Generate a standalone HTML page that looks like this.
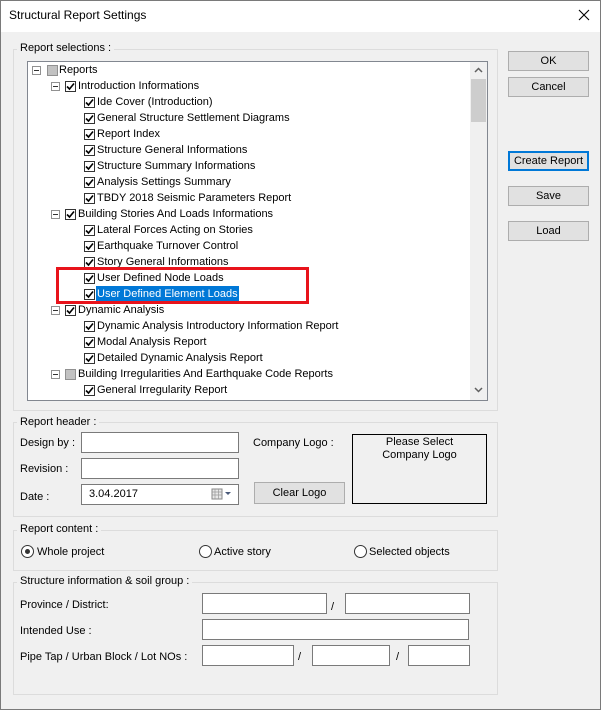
<!DOCTYPE html>
<html><head><meta charset="utf-8"><style>
*{box-sizing:border-box;margin:0;padding:0}
body{width:601px;height:710px;overflow:hidden;background:#f0f0f0;font-family:"Liberation Sans",sans-serif;font-size:11px;color:#000;position:relative}
.a{position:absolute;white-space:nowrap}
.win{position:absolute;left:0;top:0;width:601px;height:710px;border:1px solid #7a7a7a}
.title{position:absolute;left:0;top:0;width:601px;height:32px;background:#fff}
.grp{position:absolute;border:1px solid #dcdcdc}
.lg{position:absolute;background:#f0f0f0;padding:0 3px;line-height:13px}
.btn{position:absolute;width:81px;height:20px;background:#e1e1e1;border:1px solid #adadad;text-align:center;line-height:18px;font-size:11px}
.inp{position:absolute;background:#fff;border:1px solid #7a7a7a;height:21px}
.tree{position:absolute;left:27px;top:61px;width:461px;height:340px;background:#fff;border:1px solid #828790;overflow:hidden}
.r{position:absolute;height:16px;line-height:16px;white-space:nowrap}
.ex{position:absolute;width:9px;height:9px;border:1px solid #919191;background:#fff}
.ex:after{content:"";position:absolute;left:1px;top:3px;width:5px;height:1px;background:#333}
.cb{position:absolute;width:11px;height:11px;border:1px solid #333;background:#fff}
.cb svg{position:absolute;left:0;top:0}
.gr{position:absolute;width:11px;height:11px;border:1px solid #919191;background:#c2c2c2}
.rad{position:absolute;width:13px;height:13px;border:1px solid #333;border-radius:50%;background:#fff}
</style></head><body>
<div class="title"></div>
<div class="a" style="left:9px;top:8px;font-size:12px">Structural Report Settings</div>
<svg class="a" style="left:578px;top:9px" width="12" height="12"><path d="M1 1L11 11M11 1L1 11" stroke="#000" stroke-width="1.1"/></svg>

<div class="grp" style="left:13px;top:49px;width:485px;height:362px"></div>
<div class="lg" style="left:17px;top:42px">Report selections :</div>

<div class="tree">
<div id="t"></div>
<div style="position:absolute;left:442px;top:0;width:17px;height:338px;background:#f0f0f0"></div>
<div style="position:absolute;left:443px;top:17px;width:15px;height:43px;background:#cdcdcd"></div>
<svg style="position:absolute;left:446px;top:5px" width="9" height="6"><path d="M1 5L4.5 1.5L8 5" stroke="#606060" stroke-width="1.5" fill="none"/></svg>
<svg style="position:absolute;left:446px;top:325px" width="9" height="6"><path d="M1 1L4.5 4.5L8 1" stroke="#606060" stroke-width="1.5" fill="none"/></svg>
</div>

<div style="position:absolute;left:56px;top:267px;width:253px;height:37px;border:3px solid #e8131b"></div>

<div class="btn" style="left:508px;top:51px">OK</div>
<div class="btn" style="left:508px;top:77px">Cancel</div>
<div class="btn" style="left:508px;top:151px;border:2px solid #0078d7;line-height:16px">Create Report</div>
<div class="btn" style="left:508px;top:186px">Save</div>
<div class="btn" style="left:508px;top:221px">Load</div>

<div class="grp" style="left:13px;top:422px;width:485px;height:95px"></div>
<div class="lg" style="left:17px;top:416px">Report header :</div>
<div class="a" style="left:20px;top:437px">Design by :</div>
<div class="inp" style="left:81px;top:432px;width:158px"></div>
<div class="a" style="left:20px;top:463px">Revision :</div>
<div class="inp" style="left:81px;top:458px;width:158px"></div>
<div class="a" style="left:20px;top:491px">Date :</div>
<div class="inp" style="left:81px;top:484px;width:158px"></div>
<div class="a" style="left:89px;top:488px">3.04.2017</div>
<svg class="a" style="left:211px;top:487px" width="26" height="14"><rect x="1" y="2" width="10" height="10" fill="#e8e8e8" stroke="#888"/><path d="M1 5H11M1 8H11M4 2V12M7.5 2V12" stroke="#999" stroke-width=".7"/><path d="M14 5H20L17 8Z" fill="#4a5a7a"/></svg>
<div class="a" style="left:253px;top:437px">Company Logo :</div>
<div class="btn" style="left:254px;top:482px;width:91px;height:22px;line-height:20px">Clear Logo</div>
<div style="position:absolute;left:352px;top:434px;width:135px;height:70px;border:1px solid #000;text-align:center;line-height:13px;padding-top:1px">Please Select<br>Company Logo</div>

<div class="grp" style="left:13px;top:530px;width:485px;height:41px"></div>
<div class="lg" style="left:17px;top:523px">Report content :</div>
<div class="rad" style="left:21px;top:545px"><div style="position:absolute;left:3px;top:3px;width:5px;height:5px;border-radius:50%;background:#333"></div></div>
<div class="a" style="left:37px;top:546px">Whole project</div>
<div class="rad" style="left:199px;top:545px"></div>
<div class="a" style="left:214px;top:546px">Active story</div>
<div class="rad" style="left:354px;top:545px"></div>
<div class="a" style="left:369px;top:546px">Selected objects</div>

<div class="grp" style="left:13px;top:582px;width:485px;height:113px"></div>
<div class="lg" style="left:17px;top:575px">Structure information &amp; soil group :</div>
<div class="a" style="left:20px;top:599px">Province / District:</div>
<div class="inp" style="left:202px;top:593px;width:125px"></div>
<div class="a" style="left:331px;top:601px">/</div>
<div class="inp" style="left:345px;top:593px;width:125px"></div>
<div class="a" style="left:20px;top:625px">Intended Use :</div>
<div class="inp" style="left:202px;top:619px;width:267px"></div>
<div class="a" style="left:20px;top:651px">Pipe Tap / Urban Block / Lot NOs :</div>
<div class="inp" style="left:202px;top:645px;width:92px"></div>
<div class="a" style="left:298px;top:651px">/</div>
<div class="inp" style="left:312px;top:645px;width:78px"></div>
<div class="a" style="left:396px;top:651px">/</div>
<div class="inp" style="left:408px;top:645px;width:62px"></div>

<div class="win"></div>
<script>
var items=[
[0,1,"Reports",1],[1,1,"Introduction Informations"],[2,0,"Ide Cover (Introduction)"],[2,0,"General Structure Settlement Diagrams"],[2,0,"Report Index"],[2,0,"Structure General Informations"],[2,0,"Structure Summary Informations"],[2,0,"Analysis Settings Summary"],[2,0,"TBDY 2018 Seismic Parameters Report"],
[1,1,"Building Stories And Loads Informations"],[2,0,"Lateral Forces Acting on Stories"],[2,0,"Earthquake Turnover Control"],[2,0,"Story General Informations"],[2,0,"User Defined Node Loads"],[2,0,"User Defined Element Loads",0,1],
[1,1,"Dynamic Analysis"],[2,0,"Dynamic Analysis Introductory Information Report"],[2,0,"Modal Analysis Report"],[2,0,"Detailed Dynamic Analysis Report"],
[1,1,"Building Irregularities And Earthquake Code Reports",1],[2,0,"General Irregularity Report"]];
var h="",ck='<svg width="9" height="9"><path d="M1 4.5L3.5 7L8 1.5" stroke="#000" stroke-width="1.6" fill="none"/></svg>';
items.forEach(function(it,i){var y=i*16+1,lv=it[0];
var ex=[4,23,0][lv],cb=[19,37,56][lv],tx=[31,50,69][lv];
if(it[1])h+='<div class="ex" style="left:'+ex+'px;top:'+(y+3)+'px"></div>';
if(it[3])h+='<div class="gr" style="left:'+cb+'px;top:'+(y+2)+'px"></div>';
else h+='<div class="cb" style="left:'+cb+'px;top:'+(y+2)+'px">'+ck+'</div>';
var st=it[4]?'background:#0078d7;color:#fff;padding:0 1px;left:'+(tx-1)+'px;':'left:'+tx+'px;';
h+='<div class="r" style="'+st+'top:'+(y-1)+'px">'+it[2]+'</div>';});
document.getElementById("t").innerHTML=h;
</script>
</body></html>
